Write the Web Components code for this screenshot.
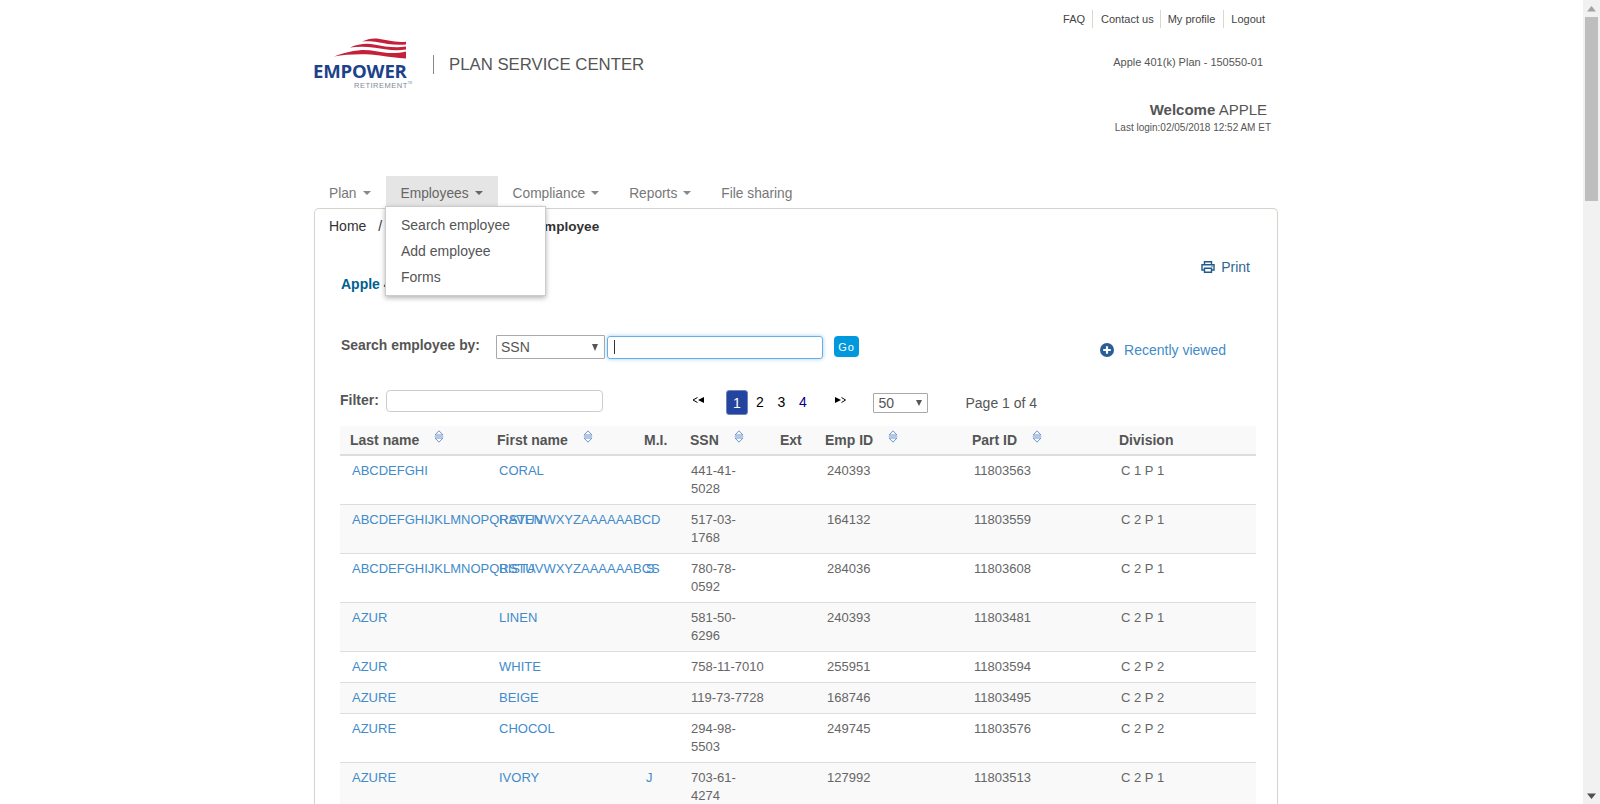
<!DOCTYPE html>
<html lang="en">
<head>
<meta charset="utf-8">
<title>Plan Service Center</title>
<style>
  html, body { margin: 0; height: 804px; overflow: hidden; background: #fff; }
  body { font: 14px/20px "Liberation Sans", Arial, sans-serif; color: #555; }
</style>
</head>
<body>
<ep-page>
  <ep-header></ep-header>
  <ep-nav></ep-nav>
  <ep-panel>
    <ep-breadcrumb></ep-breadcrumb>
    <ep-title-row></ep-title-row>
    <ep-search-row></ep-search-row>
    <ep-filter-row></ep-filter-row>
    <ep-table></ep-table>
  </ep-panel>
</ep-page>
<ep-scrollbar></ep-scrollbar>

<script>
function define(name, css, html, setup) {
  customElements.define(name, class extends HTMLElement {
    constructor() {
      super();
      this.attachShadow({ mode: "open" });
      this.shadowRoot.innerHTML = "<style>*, *::before, *::after { box-sizing: border-box; }" + css + "</style>" + html;
      if (setup) setup(this.shadowRoot);
    }
  });
}

define("ep-page", `
  :host { display: block; width: 964px; margin-left: 314px; }
`, `<slot></slot>`);

define("ep-logo", `
  :host { display: block; position: relative; width: 100px; height: 52px; color: #1d428a; }
  svg { display: block; margin-left: 20px; }
  .name { font: bold 18.6px/18px "Open Sans", "Liberation Sans", sans-serif; letter-spacing: -0.2px; margin: 2px 0 0 -1px; }
  .sub { font: 7.5px/8px "Liberation Sans", sans-serif; letter-spacing: .5px; color: #7d8a99; margin: -1px 0 0 40px; white-space: nowrap; }
  .sub sup { font-size: 3px; vertical-align: 4px; letter-spacing: 0; }
`, `
  <svg width="73" height="22" viewBox="0 0 73 22" fill="#c5203a">
    <path d="M28 3.5C34 1 38 0 43 .6 52 1.8 60 4.6 72 3.7V6.4C60 7.4 52 5.6 44 4.2 38 3.2 33 3.2 28 3.5Z"/>
    <path d="M16 9.4C24 6 32 5 40 6.4 50 8.2 60 10.2 72 8.6V11.6C60 13 50 11.4 41 9.8 32 8.4 24 8.4 16 9.4Z"/>
    <path d="M0 18.4C8 15 17 13 26 12.2 36 11.6 46 14.4 54 15 61 15.4 67 14.6 72 13.4V20.6C64 19.8 54 18.6 46 17.4 33 15.6 14 15.8 0 18.4Z"/>
  </svg>
  <div class="name">EMPOWER</div>
  <div class="sub">RETIREMENT<sup>TM</sup></div>
`);

define("ep-header", `
  :host { display: flex; justify-content: space-between; height: 176px; }
  .brand { display: flex; align-items: flex-start; padding-top: 38px; }
  .app { margin: 17px 0 0 19px; padding-left: 15px; border-left: 1px solid #888; font-size: 16.75px; line-height: 19px; color: #555; white-space: nowrap; }
  .side { display: flex; flex-direction: column; align-items: flex-end; font-size: 11px; color: #555; }
  .links { display: flex; margin: 10px 13px 0 0; line-height: 18px; }
  .links a { padding: 0 7px; border-left: 1px solid #d8d8d0; color: #444; }
  .links a:first-child { border-left: 0; }
  .links a:nth-child(2) { padding: 0 6px 0 8px; }
  .links a:nth-child(3) { padding-right: 8px; }
  .links a:last-child { padding-right: 0; }
  .plan { margin: 25px 15px 0 0; line-height: 18px; }
  .welcome { margin: 29px 11px 0 0; font-size: 15px; line-height: 20px; }
  .login { margin: 1px 7px 0 0; font-size: 10px; line-height: 14px; }
`, `
  <div class="brand">
    <ep-logo></ep-logo>
    <div class="app">PLAN SERVICE CENTER</div>
  </div>
  <div class="side">
    <nav class="links"><a>FAQ</a><a>Contact us</a><a>My profile</a><a>Logout</a></nav>
    <div class="plan">Apple 401(k) Plan - 150550-01</div>
    <div class="welcome"><b>Welcome</b> APPLE</div>
    <div class="login">Last login:02/05/2018 12:52 AM ET</div>
  </div>
`);

define("ep-nav", `
  :host { display: flex; position: relative; height: 32px; z-index: 5; font-size: 13.75px; }
  a { display: block; padding: 2px 15px 0; line-height: 32px; color: #777; height: 32px; white-space: nowrap; }
  a.open { background: #e5e5e5; color: #666; }
  i { display: inline-block; margin-left: 6px; vertical-align: 3px; border: 4px solid transparent; border-top-color: #888; border-bottom: 0; border-left-width: 4.5px; border-right-width: 4.5px; }
  a.open i { border-top-color: #666; }
  .menu { position: absolute; left: 71px; top: 30px; width: 161px; height: 90px; padding-top: 5px; background: #fff; border: 1px solid #ccc; box-shadow: 0 2px 5px rgba(0,0,0,.3); color: #555; font-size: 14px; }
  .menu div { padding-left: 15px; height: 26px; line-height: 26px; white-space: nowrap; }
`, `
  <a>Plan<i></i></a><a class="open">Employees<i></i></a><a>Compliance<i></i></a><a>Reports<i></i></a><a>File sharing</a>
  <div class="menu"><div>Search employee</div><div>Add employee</div><div>Forms</div></div>
`);

define("ep-panel", `
  :host { display: block; height: 640px; border: 1px solid #d4d4cc; border-bottom: 0; border-radius: 5px 5px 0 0; padding: 7px 21px 0 25px; }
`, `<slot></slot>`);

define("ep-breadcrumb", `
  :host { display: flex; margin-left: -11px; height: 20px; color: #333; white-space: nowrap; }
  span { margin: 0 10px 0 12px; }
  b { font-size: 13.6px; padding-top: 1px; }
`, `Home<span>/</span>Employees<span>/</span><b>Search employee</b>`);

define("ep-title-row", `
  :host { display: flex; justify-content: space-between; margin-top: 21px; height: 37px; }
  h2 { margin: 17px 0 0 1px; font-size: 14px; line-height: 20px; color: #005f8e; }
  a { display: flex; align-items: center; height: 20px; margin-right: 6px; color: #2f6690; }
  svg { margin-right: 6px; }
`, `
  <h2>Apple 401(k) Plan - 150550-01</h2>
  <a>
    <svg width="14" height="12" viewBox="0 0 14 12" fill="none" stroke="#1f5a8a" stroke-width="1.4">
      <path d="M3.5 3.5V.8h7v2.7M3.5 9H1V3.8h12V9h-2.5"/><path d="M3.5 7.2h7v4h-7z"/><path d="M10.6 5.4h.9"/>
    </svg>
    Print
  </a>
`);

define("ep-search-row", `
  :host { display: flex; align-items: center; margin-top: 41px; height: 24px; }
  b { margin: -5px 0 0 1px; width: 155px; white-space: nowrap; font-size: 13.9px; }
  .select { display: flex; justify-content: space-between; align-items: center; width: 109px; height: 24px; padding: 0 6px 0 4px; border: 1px solid #a9a9a9; border-radius: 1px; font-size: 14px; }
  .select i { border: 4px solid transparent; border-top: 7px solid #555; border-bottom: 0; border-left-width: 3px; border-right-width: 3px; }
  .input { display: flex; align-items: center; width: 216px; height: 23px; margin-left: 2px; padding-left: 6px; border: 1px solid #66afe9; border-radius: 3px; box-shadow: 0 0 4px rgba(102,175,233,.6); }
  .input i { width: 1px; height: 14px; background: #333; }
  button { width: 25px; height: 21px; margin: 0 0 1px 11px; padding: 1px 0 0; border: 0; border-radius: 4px; background: #0099dd; color: #fff; font: 11px "Liberation Sans", sans-serif; letter-spacing: 1px; }
  a { display: flex; align-items: center; margin: 6px 30px 0 auto; color: #428bca; white-space: nowrap; }
  svg { margin-right: 10px; }
`, `
  <b>Search employee by:</b>
  <div class="select">SSN<i></i></div>
  <div class="input"><i></i></div>
  <button>Go</button>
  <a>
    <svg width="14" height="14" viewBox="0 0 14 14"><circle cx="7" cy="7" r="7" fill="#2a5f96"/><path d="M7 3.2v7.6M3.2 7h7.6" stroke="#fff" stroke-width="2.2"/></svg>
    Recently viewed
  </a>
`);

define("ep-filter-row", `
  :host { display: flex; align-items: flex-start; margin-top: 31px; height: 25px; white-space: nowrap; }
  b { width: 46px; }
  .input { width: 217px; height: 22px; border: 1px solid #ccc; border-radius: 4px; }
  .pager { display: flex; align-items: flex-start; margin-left: 89px; color: #000; }
  .pager svg { margin-top: 6px; }
  .cur { width: 22px; height: 25px; margin: 0 8px 0 21px; border-radius: 3px; background: #23459f; border: 1px solid #6f84b8; color: #fff; text-align: center; line-height: 24px; }
  .num { width: 8px; margin-right: 13.5px; line-height: 25px; }
  .next { margin-left: 13px; }
  .size { display: flex; justify-content: space-between; align-items: center; width: 55px; height: 20px; margin: 3px 0 0 27px; padding: 0 5px; border: 1px solid #a9a9a9; border-radius: 1px; }
  .size i { border: 3px solid transparent; border-top: 6px solid #555; border-bottom: 0; }
  .page { margin: 3px 0 0 38px; }
`, `
  <b>Filter:</b>
  <div class="input"></div>
  <div class="pager">
    <svg width="13" height="8" viewBox="0 0 13 8"><path d="M5.5 1.5 1 4l4.5 2.5" fill="none" stroke="#000"/><path d="M12 1v6L6 4z"/></svg>
    <div class="cur">1</div><div class="num">2</div><div class="num">3</div><div class="num" style="color:#00008b">4</div>
    <svg class="next" width="12" height="8" viewBox="0 0 12 8"><path d="M1 1v6l6-3z"/><path d="M7.5 1.5 11.5 4l-4 2.5" fill="none" stroke="#000"/></svg>
  </div>
  <div class="size">50<i></i></div>
  <div class="page">Page 1 of 4</div>
`);

const SORT_ICON = `<svg class="sort" width="10" height="13" viewBox="0 0 10 13" fill="none" stroke="#6f96cf"><path d="M5 .8 1 5h8z"/><path d="M.5 6.5h9" stroke="#b4c6e2"/><path d="M5 12.2 1 8h8z"/></svg>`;

const ROWS = [
  ["ABCDEFGHI", "CORAL", "", "441-41-<br>5028", "240393", "11803563", "C 1 P 1"],
  ["ABCDEFGHIJKLMNOPQRSTUVWXYZAAAAAABCD", "RAVEN", "", "517-03-<br>1768", "164132", "11803559", "C 2 P 1"],
  ["ABCDEFGHIJKLMNOPQRSTUVWXYZAAAAAABCS", "BISTA", "S", "780-78-<br>0592", "284036", "11803608", "C 2 P 1"],
  ["AZUR", "LINEN", "", "581-50-<br>6296", "240393", "11803481", "C 2 P 1"],
  ["AZUR", "WHITE", "", "758-11-7010", "255951", "11803594", "C 2 P 2"],
  ["AZURE", "BEIGE", "", "119-73-7728", "168746", "11803495", "C 2 P 2"],
  ["AZURE", "CHOCOL", "", "294-98-<br>5503", "249745", "11803576", "C 2 P 2"],
  ["AZURE", "IVORY", "J", "703-61-<br>4274", "127992", "11803513", "C 2 P 1"]
];

define("ep-table", `
  :host { display: block; margin: 11px 0 0 0; }
  table { table-layout: fixed; width: 916px; border-collapse: collapse; }
  th { height: 29px; padding: 0 0 0 10px; background: #f9f9f9; border-bottom: 2px solid #ddd; text-align: left; white-space: nowrap; color: #555; font-size: 14px; }
  th:nth-child(4) { padding-left: 11px; }
  td { padding: 6px 0 6px 12px; border-bottom: 1px solid #ddd; font-size: 13px; line-height: 18px; vertical-align: top; white-space: nowrap; color: #666; }
  tr:nth-child(even) td { background: #f9f9f9; }
  td.link { color: #428bca; }
  .sort { margin-left: 11px; vertical-align: 2px; }
`, `
  <table>
    <colgroup><col style="width:147px"><col style="width:147px"><col style="width:45px"><col style="width:91px"><col style="width:45px"><col style="width:147px"><col style="width:147px"><col></colgroup>
    <thead><tr>
      <th>Last name ${SORT_ICON}</th><th>First name ${SORT_ICON}</th><th>M.I.</th><th>SSN ${SORT_ICON}</th>
      <th>Ext</th><th>Emp ID ${SORT_ICON}</th><th>Part ID ${SORT_ICON}</th><th>Division</th>
    </tr></thead>
    <tbody></tbody>
  </table>
`, (root) => {
  root.querySelector("tbody").innerHTML = ROWS.map((r) => `
    <tr><td class="link">${r[0]}</td><td class="link">${r[1]}</td><td class="link">${r[2]}</td>
    <td>${r[3]}</td><td></td><td>${r[4]}</td><td>${r[5]}</td><td>${r[6]}</td></tr>`).join("");
});

define("ep-scrollbar", `
  :host { display: block; position: fixed; top: 0; right: 0; width: 17px; height: 804px; background: #f1f1f1; }
  .thumb { position: absolute; left: 2px; top: 17px; width: 13px; height: 184px; background: #bebebe; }
  svg { position: absolute; left: 4px; }
`, `
  <svg style="top:6px" width="9" height="6" viewBox="0 0 9 6"><path d="M4.5 0 9 5.5H0z" fill="#a3a3a3"/></svg>
  <div class="thumb"></div>
  <svg style="top:793px" width="9" height="6" viewBox="0 0 9 6"><path d="M0 .5h9L4.5 6z" fill="#505050"/></svg>
`);
</script>
</body>
</html>
